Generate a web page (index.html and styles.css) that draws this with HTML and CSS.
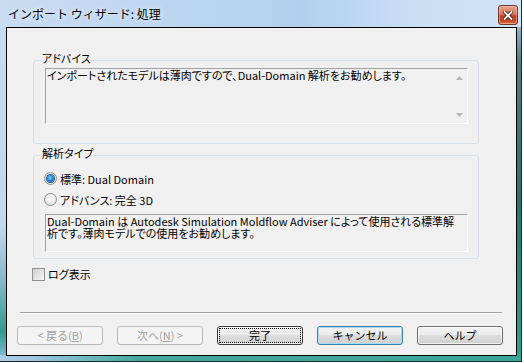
FILE: index.html
```html
<!DOCTYPE html>
<html lang="ja">
<head>
<meta charset="utf-8">
<title>インポート ウィザード: 処理</title>
<link rel="stylesheet" href="styles.css">
</head>
<body>
<div class="window">
  <div class="titlebar">
    <span class="title">インポート ウィザード: 処理</span>
    <button class="close" aria-label="閉じる">
      <svg width="10" height="9" viewBox="0 0 10 9">
        <path d="M1.5 1 L8.5 8 M8.5 1 L1.5 8" stroke="#3b1a12" stroke-width="3.6" stroke-linecap="square" fill="none"/>
        <path d="M1.5 1 L8.5 8 M8.5 1 L1.5 8" stroke="#ffffff" stroke-width="1.8" stroke-linecap="square" fill="none"/>
      </svg>
    </button>
  </div>
  <div class="client">
    <section class="group group-advice">
      <div class="group-title">アドバイス</div>
      <div class="textbox advice-box">
        <div class="textbox-text">インポートされたモデルは薄肉ですので、Dual-Domain 解析をお勧めします。</div>
        <div class="vscroll">
          <svg class="arrow" width="7" height="4" viewBox="0 0 7 4"><path d="M0 4 L3.5 0 L7 4 Z" fill="#b4b4b4"/></svg>
          <svg class="arrow" width="7" height="4" viewBox="0 0 7 4"><path d="M0 0 L3.5 4 L7 0 Z" fill="#b4b4b4"/></svg>
        </div>
      </div>
    </section>
    <section class="group group-type">
      <div class="group-title">解析タイプ</div>
      <label class="option"><span class="radio checked"></span><span>標準: Dual Domain</span></label>
      <label class="option"><span class="radio"></span><span>アドバンス: 完全 3D</span></label>
      <div class="textbox desc-box">
        <div class="textbox-text">Dual-Domain は Autodesk Simulation Moldflow Adviser によって使用される標準解<br>析です。薄肉モデルでの使用をお勧めします。</div>
      </div>
    </section>
    <label class="check-row"><span class="checkbox"></span><span>ログ表示</span></label>
    <div class="separator"></div>
    <div class="buttons">
      <button class="btn" disabled>&lt; 戻る(<u>B</u>)</button>
      <button class="btn" disabled>次へ(<u>N</u>) &gt;</button>
      <button class="btn default">完了</button>
      <button class="btn hot">キャンセル</button>
      <button class="btn">ヘルプ</button>
    </div>
  </div>
</div>
</body>
</html>
```

FILE: styles.css
```css
* { box-sizing: border-box; }
html, body { margin: 0; padding: 0; }
body {
  width: 524px;
  height: 363px;
  overflow: hidden;
  background: #ffffff;
  font-family: "Noto Sans CJK JP", "Noto Sans", sans-serif;
  font-size: 11px;
  color: #000;
  font-feature-settings: "palt";
}

.window {
  width: 522px;
  height: 362px;
  display: flex;
  flex-direction: column;
  border-right: 1px solid #1c2a30;
  border-bottom: 1px solid #1c2a30;
  background:
    linear-gradient(90deg, #a9cbe9 0px, #9fc6e4 30px, #45a89b 140px, #38a596 100%) left bottom / 100% 6px no-repeat,
    linear-gradient(180deg, #cfe1f5 0px, #557a82 60px, #2f6f6c 200px, #33a08f 100%) right top / 4px 100% no-repeat,
    linear-gradient(180deg, #c6daf1 0%, #c3d8ef 62%, #86b7c6 78%, #2f9b8c 92%, #8fc0e0 100%);
}

.titlebar {
  height: 27px;
  flex: none;
  display: flex;
  align-items: flex-start;
  padding-left: 8px;
  padding-right: 3px;
  background: linear-gradient(90deg, #c9dcf2 0%, #bcd6f0 35%, #b2d0ee 58%, #c8def4 78%, #d2e4f6 100%);
}
.title {
  flex: 1;
  margin-top: 6px;
  font-size: 12px;
  line-height: 16px;
  font-feature-settings: normal;
  color: #000;
  text-shadow: 0 0 5px rgba(255,255,255,0.9);
}
.close {
  width: 20px;
  height: 20px;
  margin-top: 5px;
  padding: 0;
  border: 1px solid #6f3528;
  border-radius: 3px;
  background: linear-gradient(180deg, #e6a58f 0%, #d8775a 45%, #c3401f 55%, #c84b27 85%, #e07a4e 100%);
  box-shadow: inset 0 0 0 1px rgba(255,210,190,0.45);
  display: flex;
  align-items: center;
  justify-content: center;
}

.client {
  flex: none;
  height: 329px;
  margin: 0 4px 0 6px;
  border: 1px solid #000;
  background: #f0f0f0;
  display: flex;
  flex-direction: column;
}

.group {
  margin: 0 37px 0 26px;
  border: 1px solid #d5dfe5;
  border-radius: 3px;
  padding: 0 10px 0 11px;
}
.group-advice { margin-top: 32px; padding-bottom: 19px; }
.group-type { margin-top: 11px; padding-bottom: 6px; }

.group-title {
  width: max-content;
  margin: -9px 0 0 -4px;
  padding: 0 1px;
  line-height: 12px;
  background: #f0f0f0;
}

.textbox {
  display: flex;
  border: 1px solid;
  border-color: #a0a0a0 #ffffff #ffffff #a0a0a0;
  background: #f0f0f0;
}
.textbox-text {
  flex: 1;
  padding: 0 0 0 1px;
  line-height: 12px;
  white-space: nowrap;
}
.advice-box { margin-top: 4px; height: 56px; }
.advice-box .textbox-text { padding-top: 0; }
.vscroll {
  width: 17px;
  display: flex;
  flex-direction: column;
  justify-content: space-between;
  align-items: center;
  padding: 7px 0 6px 1px;
}

.option {
  height: 21px;
  display: flex;
  align-items: center;
  margin-left: -1px;
}
.group-type .group-title + .option { margin-top: 9px; }
.radio {
  width: 13px;
  height: 13px;
  margin-right: 3px;
  border-radius: 50%;
  border: 1px solid #8e8f8f;
  background: radial-gradient(circle at 50% 40%, #ffffff 0%, #f1f1f1 40%, #d2d2d2 100%);
  display: flex;
  align-items: center;
  justify-content: center;
}
.radio.checked::after {
  content: "";
  width: 7px;
  height: 7px;
  border-radius: 50%;
  background: radial-gradient(circle at 45% 40%, #8fd6ff 0%, #2a8ad4 45%, #0c4f94 100%);
  box-shadow: 0 0 0 1px #1c5b8f;
}
.desc-box { margin-top: 4px; height: 38px; }

.check-row {
  height: 20px;
  margin: 5px 0 0 25px;
  display: flex;
  align-items: center;
}
.checkbox {
  width: 13px;
  height: 13px;
  margin-right: 3px;
  border: 1px solid #8e8f8f;
  background: linear-gradient(135deg, #cfcfcf 0%, #e6e6e6 60%, #f7f7f7 100%);
}

.separator {
  height: 2px;
  margin: 28px 14px 0 13px;
  border-top: 1px solid #a0a0a0;
  border-bottom: 1px solid #ffffff;
}

.buttons {
  display: flex;
  gap: 14px;
  margin: 12px 0 0 10px;
}
.btn {
  width: 86px;
  height: 19px;
  padding: 0;
  font-family: inherit;
  font-size: 11px;
  line-height: 15px;
  color: #000;
  border: 1px solid #707070;
  border-radius: 3px;
  background: linear-gradient(180deg, #f2f2f2 0%, #ebebeb 50%, #dddddd 50%, #cfcfcf 100%);
  box-shadow: inset 0 0 0 1px rgba(255,255,255,0.7);
}
.btn u { text-decoration: underline; text-underline-offset: 1px; }
.btn:disabled {
  color: #a0a0a0;
  border-color: #b8b8b8;
  background: #f4f4f4;
  box-shadow: none;
}
.btn.default {
  border-color: #3a3a3a;
  outline: 1px dotted #000;
  outline-offset: -3px;
}
.btn.hot {
  border-color: #3c7fb1;
  box-shadow: inset 0 0 0 1px #a8dcf6;
}
```
